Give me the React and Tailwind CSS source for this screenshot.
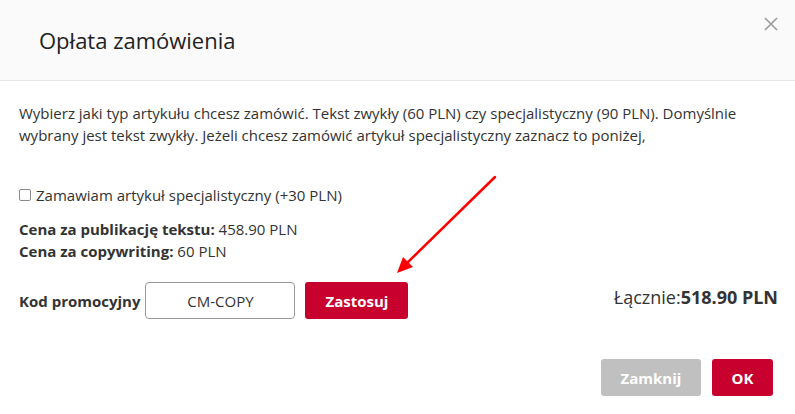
import React from "react";

const App = () => {
  return (
    <div className="relative w-[795px] h-[414px] bg-white text-[#333] font-['Open_Sans',sans-serif] overflow-hidden">
      {/* Naglowek */}
      <div className="h-[81px] bg-[#fafafa] border-b border-[#e6e6e6] flex items-center justify-between pl-[39px] pr-[16px]">
        <h1 className="text-[22px] leading-none text-[#222] -mt-[1px]">Opłata zamówienia</h1>
        <button className="self-start mt-[16px] text-[#999]">
          <svg width="16" height="16" viewBox="0 0 16 16">
            <path d="M2 2 L14 14 M14 2 L2 14" stroke="#9a9a9a" strokeWidth="1.6" />
          </svg>
        </button>
      </div>

      {/* Tresc */}
      <div className="pl-[19px] pr-[19px] pt-[21px] text-[15px] leading-[22px]">
        <p>
          Wybierz jaki typ artykułu chcesz zamówić. Tekst zwykły (60 PLN) czy specjalistyczny (90 PLN). Domyślnie
          wybrany jest tekst zwykły. Jeżeli chcesz zamówić artykuł specjalistyczny zaznacz to poniżej,
        </p>

        <label className="mt-[38px] flex items-center gap-[5px]">
          <span className="w-[12px] h-[12px] border border-[#8a8a8a] rounded-[2px] bg-white" />
          <span>Zamawiam artykuł specjalistyczny (+30 PLN)</span>
        </label>

        <div className="mt-[12px]">
          <div>
            <b className="font-bold">Cena za publikację tekstu:</b> 458.90 PLN
          </div>
          <div>
            <b className="font-bold">Cena za copywriting:</b> 60 PLN
          </div>
        </div>

        <div className="mt-[20px] flex items-center">
          <span className="font-bold">Kod promocyjny</span>
          <div className="ml-[5px] w-[150px] h-[37px] border border-[#999] rounded-[4px] flex items-center justify-center">
            CM-COPY
          </div>
          <button className="ml-[10px] w-[103px] h-[37px] bg-[#c8002e] rounded-[3px] text-white font-bold">
            Zastosuj
          </button>
          <div className="ml-auto -mr-[2px] text-[18px] -mt-[8px]">
            Łącznie:<b className="font-bold">518.90 PLN</b>
          </div>
        </div>

        <div className="mt-[40px] flex justify-end gap-[11px] pr-[3px]">
          <button className="w-[100px] h-[37px] bg-[#c0c0c0] rounded-[3px] text-white font-bold">Zamknij</button>
          <button className="w-[61px] h-[37px] bg-[#c8002e] rounded-[3px] text-white font-bold">OK</button>
        </div>
      </div>

      {/* Strzalka */}
      <svg className="absolute left-0 top-0 pointer-events-none" width="795" height="414">
        <line x1="495" y1="177" x2="405" y2="265" stroke="#ff0000" strokeWidth="2.5" strokeLinecap="round" />
        <polygon points="397,273 403,257 413,267" fill="#ff0000" />
      </svg>
    </div>
  );
};

export default App;
